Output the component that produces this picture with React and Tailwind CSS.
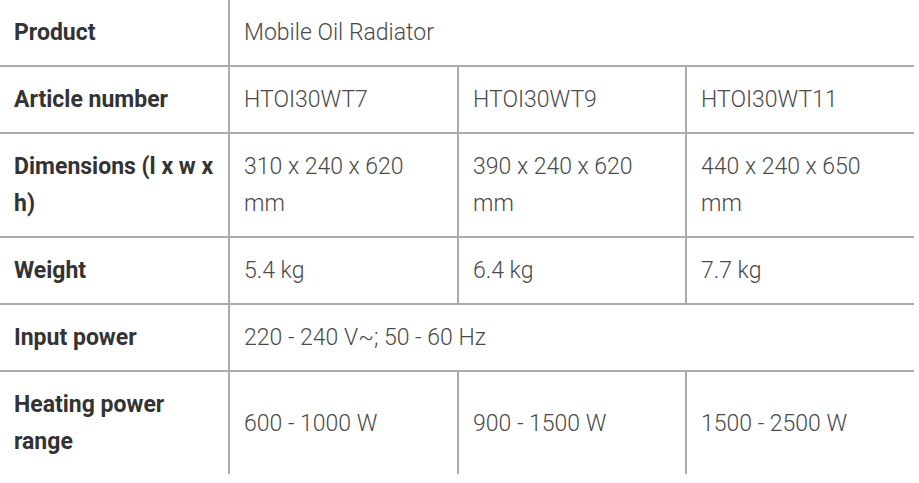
import React from 'react';

const rows = [
  { label: 'Product', values: ['Mobile Oil Radiator'] },
  { label: 'Article number', values: ['HTOI30WT7', 'HTOI30WT9', 'HTOI30WT11'] },
  { label: 'Dimensions (l x w x h)', values: ['310 x 240 x 620 mm', '390 x 240 x 620 mm', '440 x 240 x 650 mm'] },
  { label: 'Weight', values: ['5.4 kg', '6.4 kg', '7.7 kg'] },
  { label: 'Input power', values: ['220 - 240 V~; 50 - 60 Hz'] },
  { label: 'Heating power range', values: ['600 - 1000 W', '900 - 1500 W', '1500 - 2500 W'] },
];

const App = () => {
  return (
    <div className="bg-white w-[919px] h-[483px] font-['Roboto',sans-serif]">
      <table className="w-[914px] table-fixed border-collapse">
        <colgroup>
          <col className="w-[229px]" />
          <col className="w-[229px]" />
          <col className="w-[228px]" />
          <col className="w-[228px]" />
        </colgroup>
        <tbody>
          {rows.map((row, i) => (
            <tr key={row.label} className={i > 0 ? 'border-t-2 border-[#ababab]' : ''}>
              <td className="pl-[14px] pr-[10px] py-[14px] align-middle text-[23px] leading-[37px] font-bold text-[#333333]">
                {row.label}
              </td>
              {row.values.map((v) => (
                <td
                  key={v}
                  colSpan={row.values.length === 1 ? 3 : 1}
                  className="border-l-2 border-[#ababab] px-[14px] py-[14px] align-middle text-[23px] leading-[37px] font-light text-[#4a4a4a]"
                >
                  {v}
                </td>
              ))}
            </tr>
          ))}
        </tbody>
      </table>
    </div>
  );
};

export default App;
